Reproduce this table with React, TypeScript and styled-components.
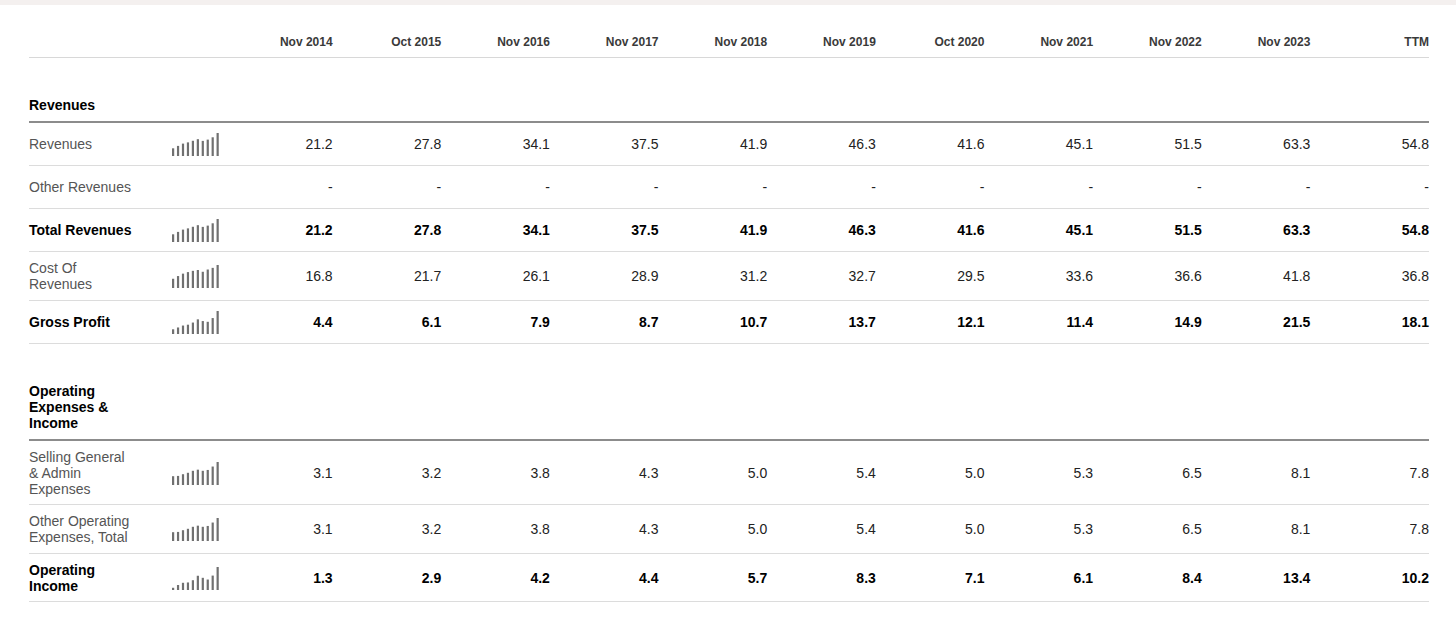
import React from 'react';
import styled, { createGlobalStyle } from 'styled-components';

type Line = {
  label: string;
  values: string[];
  bold?: boolean;
  spark?: boolean;
};

type Section = {
  title: string;
  lines: Line[];
};

const periods = [
  'Nov 2014', 'Oct 2015', 'Nov 2016', 'Nov 2017', 'Nov 2018',
  'Nov 2019', 'Oct 2020', 'Nov 2021', 'Nov 2022', 'Nov 2023', 'TTM',
];

const dashes = periods.map(() => '-');

const sections: Section[] = [
  {
    title: 'Revenues',
    lines: [
      { label: 'Revenues', spark: true, values: ['21.2', '27.8', '34.1', '37.5', '41.9', '46.3', '41.6', '45.1', '51.5', '63.3', '54.8'] },
      { label: 'Other Revenues', values: dashes },
      { label: 'Total Revenues', bold: true, spark: true, values: ['21.2', '27.8', '34.1', '37.5', '41.9', '46.3', '41.6', '45.1', '51.5', '63.3', '54.8'] },
      { label: 'Cost Of Revenues', spark: true, values: ['16.8', '21.7', '26.1', '28.9', '31.2', '32.7', '29.5', '33.6', '36.6', '41.8', '36.8'] },
      { label: 'Gross Profit', bold: true, spark: true, values: ['4.4', '6.1', '7.9', '8.7', '10.7', '13.7', '12.1', '11.4', '14.9', '21.5', '18.1'] },
    ],
  },
  {
    title: 'Operating Expenses & Income',
    lines: [
      { label: 'Selling General & Admin Expenses', spark: true, values: ['3.1', '3.2', '3.8', '4.3', '5.0', '5.4', '5.0', '5.3', '6.5', '8.1', '7.8'] },
      { label: 'Other Operating Expenses, Total', spark: true, values: ['3.1', '3.2', '3.8', '4.3', '5.0', '5.4', '5.0', '5.3', '6.5', '8.1', '7.8'] },
      { label: 'Operating Income', bold: true, spark: true, values: ['1.3', '2.9', '4.2', '4.4', '5.7', '8.3', '7.1', '6.1', '8.4', '13.4', '10.2'] },
    ],
  },
];

function Sparkline({ values }: { values: string[] }) {
  // yearly bars only, TTM left out
  const nums = values.slice(0, 10).map(Number);
  const max = Math.max(...nums);
  const h = 24;
  return (
    <svg width={47} height={h} viewBox={`0 0 47 ${h}`}>
      {nums.map((v, i) => {
        const bh = Math.max(1.5, (v / max) * 23);
        return <rect key={i} x={i * 4.95} y={h - bh} width={2.2} height={bh} fill="#707070" />;
      })}
    </svg>
  );
}

export default function App() {
  return (
    <>
      <GlobalStyle />
      <TopBand />
      <Page>
        <HeaderRow>
          <span />
          <span />
          {periods.map((p, i) => (
            <HeadCell key={p} $last={i === periods.length - 1}>{p}</HeadCell>
          ))}
        </HeaderRow>
        {sections.map(section => (
          <React.Fragment key={section.title}>
            <SectionRow>
              <SectionTitle>{section.title}</SectionTitle>
            </SectionRow>
            {section.lines.map(line => (
              <Row key={line.label}>
                <LabelCell $bold={line.bold}>{line.label}</LabelCell>
                <SparkCell>{line.spark && <Sparkline values={line.values} />}</SparkCell>
                {line.values.map((v, i) => (
                  <ValueCell key={i} $bold={line.bold} $last={i === line.values.length - 1}>{v}</ValueCell>
                ))}
              </Row>
            ))}
          </React.Fragment>
        ))}
      </Page>
    </>
  );
}

const GlobalStyle = createGlobalStyle`
  body {
    margin: 0;
    background: #fff;
    font-family: "Liberation Sans", Arial, sans-serif;
  }
`;

const TopBand = styled.div`
  height: 5px;
  background: #f4f0ef;
`;

const Page = styled.div`
  width: 1400px;
  margin-left: 29px;
`;

const grid = `
  display: grid;
  grid-template-columns: 118px 87px repeat(11, 1fr);
`;

const HeaderRow = styled.div`
  ${grid}
  height: 53px;
  align-items: end;
  border-bottom: 1px solid #d8d8d8;
  box-sizing: border-box;
  padding-bottom: 7px;
`;

const HeadCell = styled.div<{ $last?: boolean }>`
  font-size: 12px;
  line-height: 16px;
  font-weight: bold;
  color: #3a3a3a;
  text-align: right;
  padding-right: ${p => (p.$last ? 0 : 10)}px;
`;

const SectionRow = styled.div`
  padding: 39px 0 8px;
  border-bottom: 2px solid #8c8c8c;
`;

const SectionTitle = styled.div`
  width: 105px;
  font-size: 14px;
  line-height: 16px;
  font-weight: bold;
  color: #000;
`;

const Row = styled.div`
  ${grid}
  min-height: 43px;
  box-sizing: border-box;
  align-items: center;
  border-bottom: 1px solid #dcdcdc;
  padding: 8px 0 7.5px;
`;

const LabelCell = styled.div<{ $bold?: boolean }>`
  font-size: 14px;
  line-height: 16px;
  padding-right: 13px;
  font-weight: ${p => (p.$bold ? 'bold' : 'normal')};
  color: ${p => (p.$bold ? '#000' : '#555')};
`;

const SparkCell = styled.div`
  display: flex;
  align-items: center;
  padding-left: 25px;
  height: 24px;
`;

const ValueCell = styled.div<{ $bold?: boolean; $last?: boolean }>`
  font-size: 14px;
  line-height: 16px;
  text-align: right;
  padding-right: ${p => (p.$last ? 0 : 10)}px;
  font-weight: ${p => (p.$bold ? 'bold' : 'normal')};
  color: ${p => (p.$bold ? '#000' : '#222')};
`;
